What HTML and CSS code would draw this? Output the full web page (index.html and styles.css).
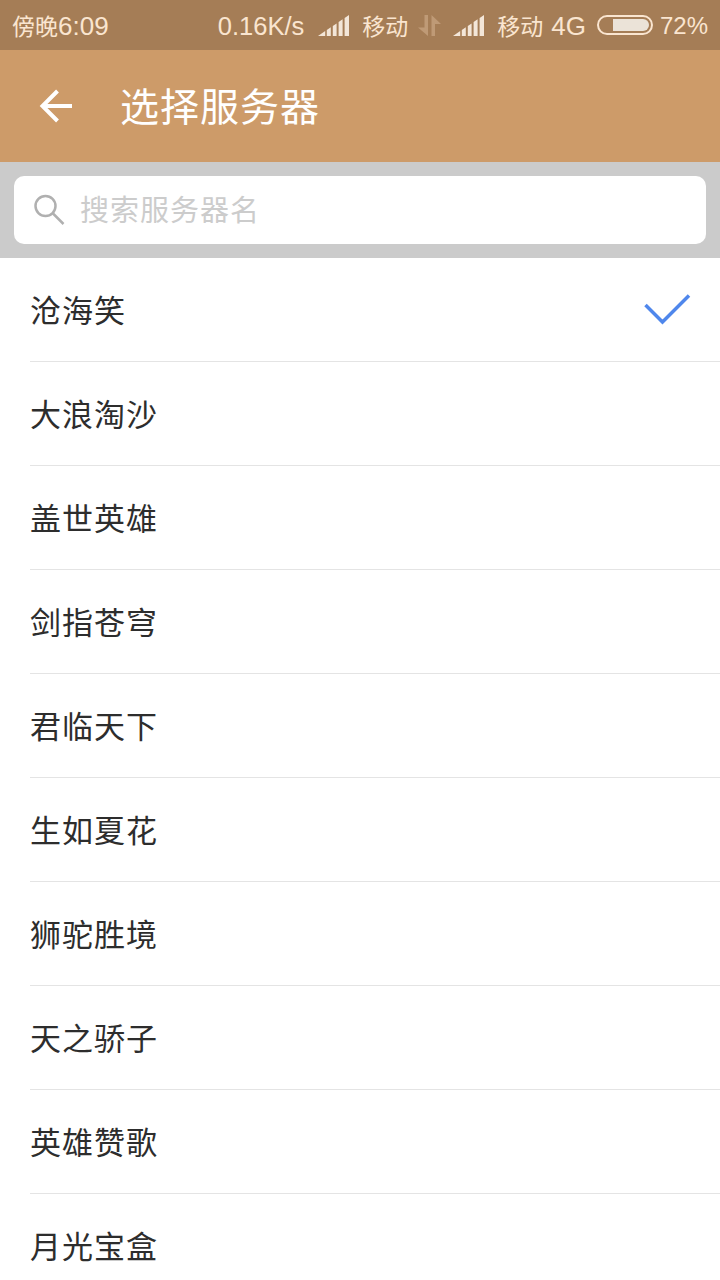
FILE: index.html
```html
<!DOCTYPE html>
<html lang="zh-CN">
<head>
    <meta charset="UTF-8">
    <meta name="viewport" content="width=device-width, initial-scale=1.0">
    <title>选择服务器</title>
    <link rel="stylesheet" href="styles.css">
</head>
<body>
    <div class="main-wrapper">
        <div class="status-bar">
            <p class="time"><span>傍晚</span>6:09</p>
            <p class="speed">0.16K/s</p>
            <svg class="signal" width="32" height="22" viewBox="0 0 32 22">
                <path d="M0 21 L7.2 16 V21 Z M8.8 15 L12.8 12.3 V21 H8.8 Z M14.8 11 L18.6 8.5 V21 H14.8 Z M20.6 7 L24.6 4.3 V21 H20.6 Z M26.6 3 L31 0 V21 H26.6 Z"/>
            </svg>
            <p class="carrier"><span>移动</span></p>
            <svg class="transfer" width="24" height="22" viewBox="0 0 24 22">
                <path d="M6.5 0 H10 V21 L0 12.5 H6.5 Z M13.5 21 V0 L23 9 H17 V21 Z"/>
            </svg>
            <svg class="signal signal-two" width="32" height="22" viewBox="0 0 32 22">
                <path d="M0 21 L7.2 16 V21 Z M8.8 15 L12.8 12.3 V21 H8.8 Z M14.8 11 L18.6 8.5 V21 H14.8 Z M20.6 7 L24.6 4.3 V21 H20.6 Z M26.6 3 L31 0 V21 H26.6 Z"/>
            </svg>
            <p class="carrier carrier-two"><span>移动</span></p>
            <p class="network">4G</p>
            <div class="battery"><div class="level"></div></div>
            <p class="percent">72%</p>
        </div>
        <div class="header">
            <svg class="back" width="34" height="34" viewBox="0 0 34 34">
                <path d="M33 17 H4 M18.5 2 L3.5 17 L18.5 32"/>
            </svg>
            <h1>选择服务器</h1>
        </div>
        <div class="search">
            <div class="search-box">
                <svg width="32" height="32" viewBox="0 0 32 32">
                    <circle cx="12.5" cy="12" r="10"/>
                    <path d="M19.5 19 L30.5 30"/>
                </svg>
                <input type="text" placeholder="搜索服务器名">
            </div>
        </div>
        <ul class="servers">
            <li>沧海笑
                <svg class="check" width="48" height="34" viewBox="0 0 48 34">
                    <path d="M2.5 12 L19.5 29 L46 2.5"/>
                </svg>
            </li>
            <li>大浪淘沙</li>
            <li>盖世英雄</li>
            <li>剑指苍穹</li>
            <li>君临天下</li>
            <li>生如夏花</li>
            <li>狮驼胜境</li>
            <li>天之骄子</li>
            <li>英雄赞歌</li>
            <li>月光宝盒</li>
        </ul>
    </div>
</body>
</html>
```
FILE: styles.css
```css
*{
    padding: 0;
    margin: 0;
    box-sizing: border-box;
    font-family: 'Liberation Sans', 'Noto Sans CJK SC', sans-serif;
}
.main-wrapper{
    width: 100%;
    height: 1280px;
    overflow: hidden;
    background: white;
}
.status-bar{
    height: 50px;
    display: flex;
    align-items: center;
    padding: 2px 12px 0;
    background: #a57d56;
    color: #fae5d0;
    font-size: 26px;
    line-height: 49px;
    white-space: nowrap;
}
.status-bar p{
    height: 48px;
}
.status-bar span{
    font-size: 23px;
}
.status-bar svg{
    fill: #f3e6d8;
    flex-shrink: 0;
}
.status-bar .speed{
    margin-left: auto;
    font-size: 25.5px;
}
.status-bar .signal{
    margin-left: 14px;
}
.status-bar .carrier{
    margin-left: 12px;
}
.status-bar .transfer{
    margin-left: 10px;
    fill: #bf9a76;
}
.status-bar .signal-two{
    margin-left: 11px;
}
.status-bar .network{
    margin-left: 8px;
}
.status-bar .battery{
    width: 56px;
    height: 20px;
    margin-left: 11px;
    margin-bottom: 2px;
    padding: 2px;
    display: flex;
    justify-content: flex-end;
    border: 2px solid #fae5d0;
    border-radius: 10px;
}
.status-bar .battery .level{
    width: 36px;
    height: 12px;
    background: #ebe3d8;
    border-radius: 0 6px 6px 0;
}
.status-bar .percent{
    margin-left: 7px;
    font-size: 24px;
    line-height: 47px;
}
.header{
    height: 112px;
    display: flex;
    align-items: center;
    padding-left: 39px;
    background: #cd9b69;
    color: white;
}
.header .back{
    fill: none;
    stroke: white;
    stroke-width: 4;
}
.header h1{
    margin-left: 47px;
    padding-top: 4px;
    font-size: 39px;
    font-weight: 400;
    letter-spacing: 1px;
    line-height: 112px;
}
.search{
    height: 96px;
    padding: 14px;
    background: #cbcbcb;
}
.search .search-box{
    height: 68px;
    display: flex;
    align-items: center;
    padding-left: 19px;
    background: white;
    border-radius: 10px;
}
.search .search-box svg{
    fill: none;
    stroke: #b0b0b0;
    stroke-width: 2.5;
}
.search .search-box input{
    flex: 1;
    height: 68px;
    margin-left: 15px;
    padding-top: 3px;
    border: none;
    outline: none;
    background: transparent;
    font-size: 29px;
    letter-spacing: 1px;
}
.search .search-box input::placeholder{
    color: #cccccc;
}
.servers{
    margin-left: 30px;
    list-style: none;
}
.servers li{
    height: 104px;
    display: flex;
    align-items: center;
    justify-content: space-between;
    padding: 0 29px 2px 0;
    border-bottom: 1px solid #e4e4e4;
    color: #2d2d2d;
    font-size: 31px;
    letter-spacing: 1px;
}
.servers .check{
    margin-top: 2px;
    fill: none;
    stroke: #4f87ec;
    stroke-width: 3.5;
}
```
